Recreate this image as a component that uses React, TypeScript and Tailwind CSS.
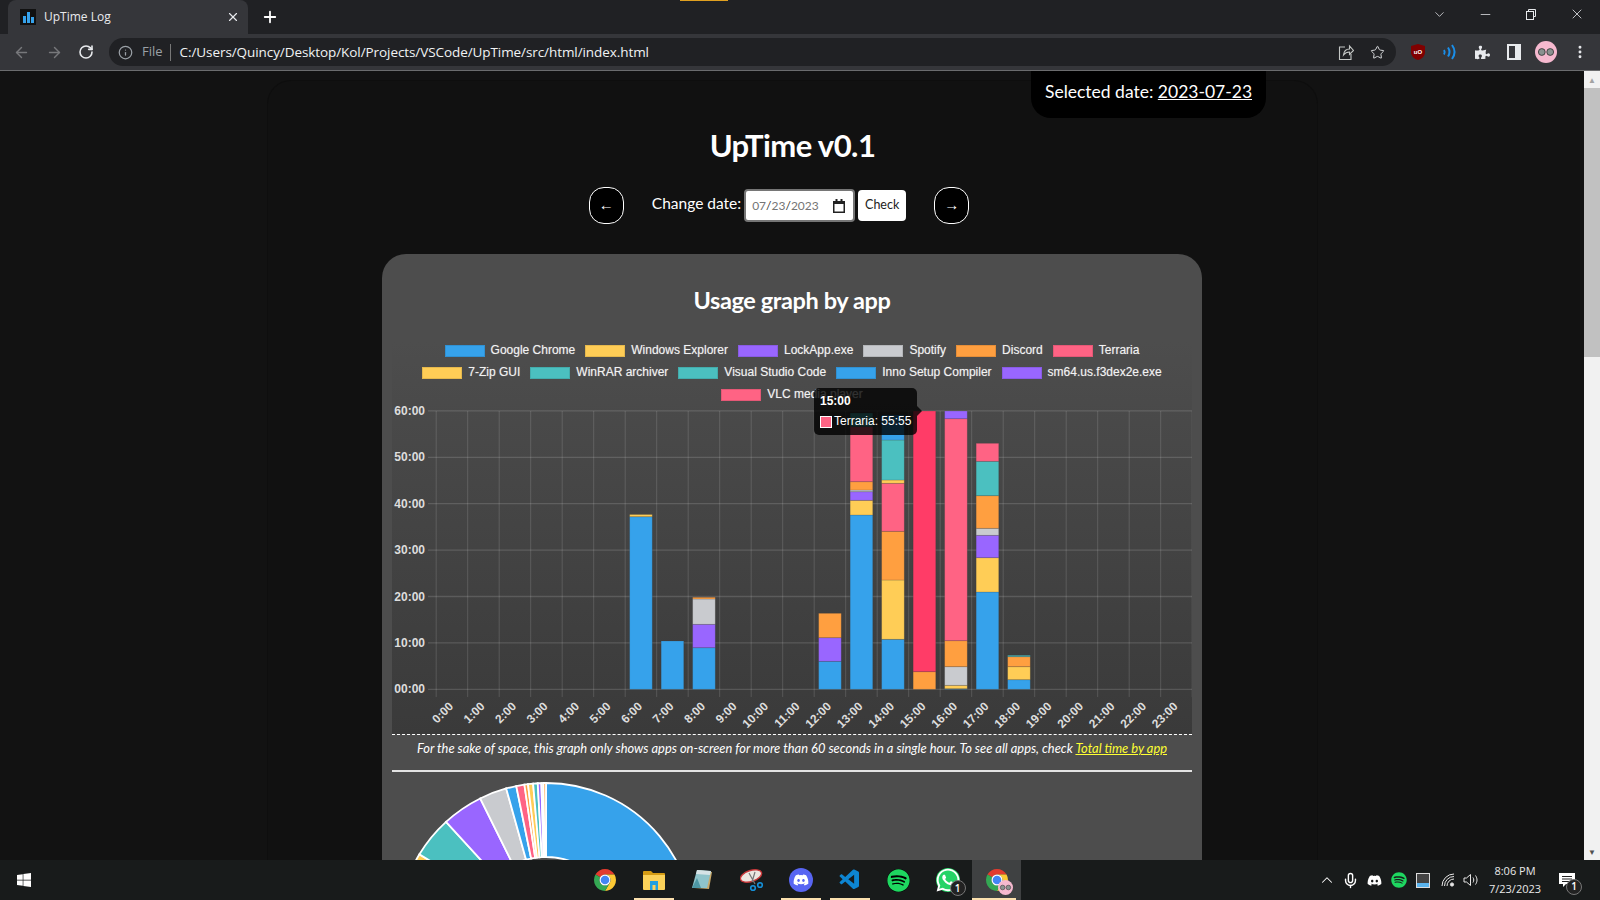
import React from "react";
import { ArrowLeft, ArrowRight, RotateCw, Info, Star, MoreVertical, X, Plus, ChevronDown, Minus, Mic, ChevronUp } from "lucide-react";
import { FaDiscord, FaSpotify, FaWhatsapp, FaWindows, FaPuzzlePiece } from "react-icons/fa";
import { VscVscode } from "react-icons/vsc";

const C = { blue: "#36a2eb", yellow: "#ffcd56", purple: "#9966ff", grey: "#c9cbcf", orange: "#ff9f40", pink: "#ff6384", teal: "#4bc0c0", red: "#ff3c67" };

const legend = [
  [["Google Chrome", C.blue], ["Windows Explorer", C.yellow], ["LockApp.exe", C.purple], ["Spotify", C.grey], ["Discord", C.orange], ["Terraria", C.pink]],
  [["7-Zip GUI", C.yellow], ["WinRAR archiver", C.teal], ["Visual Studio Code", C.teal], ["Inno Setup Compiler", C.blue], ["sm64.us.f3dex2e.exe", C.purple]],
  [["VLC media player", C.pink]],
];

const bars: [number, [string, number][]][] = [
  [6, [[C.blue, 516.7], [C.yellow, 514.5]]],
  [7, [[C.blue, 641]]],
  [8, [[C.blue, 647.7], [C.purple, 624.3], [C.grey, 599], [C.orange, 597.3]]],
  [12, [[C.blue, 661.3], [C.purple, 637.7], [C.orange, 613.3]]],
  [13, [[C.blue, 515], [C.yellow, 500.3], [C.purple, 491.7], [C.grey, 490], [C.orange, 481.7], [C.pink, 426.7], [C.teal, 413]]],
  [14, [[C.blue, 639.3], [C.yellow, 580], [C.orange, 531.3], [C.pink, 483.3], [C.yellow, 480], [C.teal, 440], [C.blue, 415]]],
  [15, [[C.orange, 671.7], [C.red, 411]]],
  [16, [[C.blue, 688.7], [C.yellow, 685.3], [C.grey, 666.7], [C.orange, 640.7], [C.pink, 418.7], [C.purple, 411]]],
  [17, [[C.blue, 592], [C.yellow, 557.7], [C.purple, 535.3], [C.grey, 528.3], [C.orange, 495.7], [C.teal, 461.3], [C.pink, 443.3]]],
  [18, [[C.blue, 679.7], [C.yellow, 666.7], [C.orange, 656.7], [C.teal, 655.3]]],
];

const X0 = 392, Y0 = 406, BASE = 689.3;

function Plot() {
  const gx = Array.from({ length: 25 }, (_, i) => 436.2 + i * 31.5 - X0);
  const gy = [0, 1, 2, 3, 4, 5].map((i) => BASE - i * 46.4 - Y0);
  const labels = ["00:00", "10:00", "20:00", "30:00", "40:00", "50:00", "60:00"];
  const grid = "rgba(255,255,255,0.14)";
  return (
    <svg width="800" height="328" viewBox="0 0 800 328" className="block">
      {gx.map((x, i) => <line key={i} x1={x} x2={x} y1={5} y2={291} stroke={grid} />)}
      {[...gy, BASE - 6 * 46.4 - Y0].map((y, i) => <line key={i} x1={36} x2={800} y1={y} y2={y} stroke={grid} strokeWidth={1.3} />)}
      {labels.map((l, i) => (
        <text key={l} x={33} y={BASE - i * 46.4 - Y0 + 4} textAnchor="end" fontFamily="Liberation Sans" fontWeight="700" fontSize="12" fill="#dddddd">{l}</text>
      ))}
      {Array.from({ length: 24 }, (_, i) => {
        const cx = 436.2 + (i + 0.5) * 31.5 - X0;
        return (
          <text key={i} transform={`translate(${cx + 2} ${301}) rotate(-45)`} textAnchor="end" fontFamily="Liberation Sans" fontWeight="700" fontSize="12" fill="#dddddd">{i}:00</text>
        );
      })}
      {bars.map(([h, segs]) => {
        const cx = 436.2 + (h + 0.5) * 31.5 - X0;
        let prev = BASE;
        return segs.map(([col, top], j) => {
          const el = <rect key={`${h}-${j}`} x={cx - 11.3} width={22.6} y={top - Y0} height={prev - top} fill={col} stroke="rgba(60,60,60,0.25)" strokeWidth={0.8} />;
          prev = top;
          return el;
        });
      })}
    </svg>
  );
}

function Pie() {
  const cx = 150, cy = 150, R = 148, r = 74;
  const pt = (a: number, rad: number) => {
    const t = ((a - 90) * Math.PI) / 180;
    return `${cx + rad * Math.cos(t)} ${cy + rad * Math.sin(t)}`;
  };
  const slices: [number, number, string][] = [
    [0, 200, C.blue], [200, 301.2, C.yellow], [301.2, 317.5, C.teal], [317.5, 333.6, C.purple], [333.6, 344.4, C.grey],
    [344.4, 348.4, C.blue], [348.4, 351.6, C.pink], [351.6, 353, C.orange], [353, 355, C.yellow], [355, 356.8, C.teal], [356.8, 358.2, C.purple], [358.2, 359, C.grey], [359, 360, C.orange],
  ];
  return (
    <svg width="300" height="300" viewBox="0 0 300 300" className="block">
      {slices.map(([a, b, c], i) => (
        <path key={i} d={`M${pt(a, R)} A${R} ${R} 0 ${b - a > 180 ? 1 : 0} 1 ${pt(b, R)} L${pt(b, r)} A${r} ${r} 0 ${b - a > 180 ? 1 : 0} 0 ${pt(a, r)} Z`} fill={c} stroke="#ffffff" strokeWidth={1.8} />
      ))}
    </svg>
  );
}

function Chrome({ s = 24 }: { s?: number }) {
  return (
    <svg width={s} height={s} viewBox="0 0 48 48">
      <path d="M4.95 13 A22 22 0 0 1 43.05 13 L24 13 A11 11 0 0 0 14.47 18.5 Z" fill="#e33b2e" />
      <path d="M43.05 13 A22 22 0 0 1 24 46 L33.53 29.5 A11 11 0 0 0 24 13 Z" fill="#fcc934" />
      <path d="M24 46 A22 22 0 0 1 4.95 13 L14.47 18.5 A11 11 0 0 0 33.53 29.5 Z" fill="#34a853" />
      <circle cx="24" cy="24" r="11" fill="#fff" />
      <circle cx="24" cy="24" r="8.6" fill="#4285f4" />
    </svg>
  );
}

function Avatar({ s = 22 }: { s?: number }) {
  return (
    <svg width={s} height={s} viewBox="0 0 22 22">
      <circle cx="11" cy="11" r="11" fill="#f6b9cf" />
      <circle cx="6.800" cy="11" r="3.400" fill="#8a9290" stroke="#2f2f2f" strokeWidth=".8" />
      <circle cx="15.200" cy="11" r="3.400" fill="#8a9290" stroke="#2f2f2f" strokeWidth=".8" />
    </svg>
  );
}

function Slot({ on, bg, children }: { on?: boolean; bg?: boolean; children: React.ReactNode }) {
  return (
    <div className={`relative flex h-10 w-[49px] items-center justify-center ${bg ? "bg-[#3f4142]" : ""}`}>
      {children}
      {on && <div className={`absolute bottom-0 h-[2px] bg-[#fbe0ae] ${bg ? "left-0 w-[44px]" : "left-1/2 w-10 -translate-x-1/2"}`} />}
    </div>
  );
}

function Badge({ className }: { className: string }) {
  return <div className={`absolute flex h-[16px] w-[16px] items-center justify-center rounded-full border border-[#777] bg-[#222] font-['Open_Sans',sans-serif] text-[10px] font-semibold text-white ${className}`}>1</div>;
}

export default function App() {
  return (
    <div className="flex h-[900px] w-[1600px] flex-col overflow-hidden bg-[#121212] font-['Open_Sans',sans-serif]">
      {/* tab strip */}
      <div className="relative flex h-[34px] items-end bg-[#202124] pl-2">
        <div className="absolute left-[680px] top-0 h-px w-12 bg-[#e0a020]" />
        <div className="flex h-[34px] w-[240px] items-center rounded-t-lg bg-[#35363a] pl-3 pr-2">
          <div className="flex h-4 w-4 items-end justify-center gap-px bg-[#111] pb-[2px]">
            <div className="h-[7px] w-[3px] bg-[#36a2eb]" />
            <div className="h-[11px] w-[3px] bg-[#36a2eb]" />
            <div className="h-[6px] w-[3px] bg-[#36a2eb]" />
          </div>
          <span className="ml-2 text-[12px] text-[#e8eaed]">UpTime Log</span>
          <X size={14} strokeWidth={2} className="ml-auto text-[#e8eaed]" />
        </div>
        <Plus size={18} strokeWidth={2.4} className="mb-[8px] ml-[13px] text-white" />
        <div className="ml-auto mb-[12px] flex items-center text-[#e8eaed]">
          <div className="flex w-[46px] justify-center"><ChevronDown size={15} strokeWidth={1.2} /></div>
          <div className="flex w-[46px] justify-center"><Minus size={15} strokeWidth={1.2} /></div>
          <div className="flex w-[46px] justify-center"><svg width="12" height="12" viewBox="0 0 12 12" fill="none" stroke="#e8eaed"><rect x="1.5" y="3.5" width="7" height="8" /><path d="M3.5 3.5V1.5H10.5V8.5H8.5" /></svg></div>
          <div className="flex w-[46px] justify-center"><X size={16} strokeWidth={1.2} /></div>
        </div>
      </div>
      {/* toolbar */}
      <div className="flex h-[37px] items-center border-b border-[#6b6c6e] bg-[#35363a] pl-[13px]">
        <ArrowLeft size={17} className="text-[#77787b]" />
        <ArrowRight size={17} className="ml-[16px] text-[#77787b]" />
        <RotateCw size={16} strokeWidth={2.4} className="ml-[15px] text-[#e8eaed]" />
        <div className="ml-[15px] flex h-[28px] w-[1287px] items-center rounded-full bg-[#202124] pl-[9px] pr-[11px]">
          <Info size={15} className="text-[#9aa0a6]" />
          <span className="ml-[9px] text-[13px] text-[#9aa0a6]">File</span>
          <div className="ml-[7px] h-[17px] w-px bg-[#777]" />
          <span className="ml-[9px] text-[13.5px] tracking-[-0.08px] text-[#f1f3f4]">C:/Users/Quincy/Desktop/Kol/Projects/VSCode/UpTime/src/html/index.html</span>
          <svg width="16" height="18" viewBox="0 0 16 18" fill="none" stroke="#c4c7c5" strokeWidth="1.1" className="ml-auto">
            <path d="M7 4H1.5V16.5H13V11" /><path d="M5.5 12c.5-4 3-6 6-6V3l4 4.5-4 4V9c-3 0-4.500 1-6 3z" />
          </svg>
          <Star size={15} strokeWidth={1.6} className="ml-[16px] text-[#d5d7d9]" />
        </div>
        <svg width="16" height="18" viewBox="0 0 16 18" className="ml-[14px]"><path d="M8 1 15 3v6c0 4-3 7-7 8-4-1-7-4-7-8V3z" fill="#800000" /><text x="8" y="11" textAnchor="middle" fontSize="6" fontWeight="700" fill="#fff" fontFamily="Liberation Sans">uO</text></svg>
        <svg width="16" height="18" viewBox="0 0 16 18" fill="none" stroke="#1a8ee8" strokeWidth="2" className="ml-[16px]"><path d="M2 7c1 1.500 1 3 0 4.500" /><path d="M6 4.500c2 3 2 6 0 9" /><path d="M10 2c3.300 4.500 3.300 9.500 0 14" /></svg>
        <FaPuzzlePiece size={15} className="ml-[17px] text-[#e8eaed]" />
        <div className="ml-[17px] h-[16px] w-[14px] border-2 border-[#e8eaed] border-r-[6px]" />
        <div className="ml-[14px]"><Avatar /></div>
        <MoreVertical size={16} strokeWidth={2.4} className="ml-[15px] text-[#e8eaed]" />
      </div>
      {/* middle */}
      <div className="flex min-h-0 flex-1">
        <div className="relative min-w-0 flex-1 overflow-hidden bg-[#121212]">
          <div className="relative ml-[267px] mt-[9px] h-[1200px] w-[1051px] rounded-t-3xl border-x border-t border-[#0e0e0e] bg-[#111111]">
            <div className="absolute right-[51px] top-[-10px] flex h-[47px] w-[235px] items-center justify-center whitespace-nowrap rounded-b-[20px] bg-black pb-[5px] font-['Lato',sans-serif] text-[17.5px] text-white">
              <span>Selected date:&nbsp;<span className="underline">2023-07-23</span></span>
            </div>
            <h1 className="pt-[42px] text-center font-['Lato',sans-serif] text-[31px] font-bold leading-[44px] tracking-[-0.55px] text-white">UpTime v0.1</h1>
            <div className="mt-[20px] flex items-center justify-center pr-[27px] font-['Lato',sans-serif]">
              <div className="flex h-[37px] w-[35px] items-center justify-center rounded-[15px] border border-white bg-black font-['Liberation_Sans',sans-serif] text-[15px] text-white">←</div>
              <span className="ml-[28px] pb-[3px] text-[15.5px] text-white">Change date:</span>
              <div className="ml-[3px] flex h-[33px] w-[111px] items-center rounded-[4px] border-2 border-[#767676] bg-white pl-[6px] pr-[6px] text-[12px] text-[#757575]">
                <span>07<span className="text-[#333]">/</span>23<span className="text-[#333]">/</span>2023</span>
                <svg width="12" height="14" viewBox="0 0 12 14" className="ml-auto mr-[2px]"><path d="M0 2h12v12H0z" fill="#222" /><path d="M1.500 5h9v7.500h-9z" fill="#fff" /><path d="M2.500 0h2v2h-2zM7.500 0h2v2h-2z" fill="#222" /></svg>
              </div>
              <div className="ml-[3px] flex h-[31px] w-[48px] items-center justify-center rounded-[4px] bg-white text-[12.5px] text-[#222]">Check</div>
              <div className="ml-[28px] flex h-[37px] w-[35px] items-center justify-center rounded-[15px] border border-white bg-black font-['Liberation_Sans',sans-serif] text-[15px] text-white">→</div>
            </div>
            <div className="ml-[114px] mt-[30px] w-[820px] rounded-t-3xl bg-[#4d4d4d] px-[10px] pb-10">
              <h2 className="pt-[29px] text-center font-['Lato',sans-serif] text-[23.5px] font-bold leading-[34px] tracking-[-0.4px] text-white">Usage graph by app</h2>
              <div className="mt-[23px] border-b border-dashed border-white bg-gradient-to-b from-[#4d4d4d] to-[#3a3a3a]">
                <div className="flex flex-col items-center font-['Liberation_Sans',sans-serif] text-[12px] text-[#f2f2f2] [text-shadow:0_0_1px_rgba(255,255,255,0.45)]">
                  {legend.map((row, i) => (
                    <div key={i} className="flex h-[22px] items-center gap-x-[10px]">
                      {row.map(([n, c]) => (
                        <div key={n} className="flex items-center gap-[6px]">
                          <div className="h-[12px] w-[40px] border border-black/10" style={{ backgroundColor: c }} />
                          <span className="pb-[2px]">{n}</span>
                        </div>
                      ))}
                    </div>
                  ))}
                </div>
                <Plot />
              </div>
              <p className="h-[35px] pt-[4px] text-center font-['Lato',sans-serif] text-[12.9px] italic leading-[18px] text-white">
                For the sake of space, this graph only shows apps on-screen for more than 60 seconds in a single hour. To see all apps, check <span className="text-[#ffff33] underline">Total time by app</span>
              </p>
              <div className="h-[2px] bg-[#e3e3e3]" />
              <div className="ml-[4px] mt-[9px]"><Pie /></div>
            </div>
            {/* tooltip */}
            <div className="absolute left-[546px] top-[307px] h-[47px] w-[103px] rounded-[5px] bg-black/80 font-['Liberation_Sans',sans-serif] text-[12px] text-white">
              <div className="absolute left-[6px] top-[4px] font-bold">15:00</div>
              <div className="absolute left-[6px] top-[28px] h-[12px] w-[12px] border border-white bg-[#ff6384]" />
              <div className="absolute left-[20px] top-[24px] whitespace-nowrap">Terraria: 55:55</div>
              <div className="absolute left-full top-[18px] h-0 w-0 border-y-[5px] border-l-[5px] border-y-transparent border-l-black/80" />
            </div>
          </div>
        </div>
        {/* scrollbar */}
        <div className="flex w-4 flex-col items-center bg-[#f1f1f1]">
          <div className="flex h-[17px] items-center justify-center text-[8px] leading-none text-[#a3a3a3]">▲</div>
          <div className="h-[269px] w-full bg-[#c1c1c1]" />
          <div className="flex-1" />
          <div className="flex h-[17px] items-center justify-center text-[8px] leading-none text-[#505050]">▼</div>
        </div>
      </div>
      {/* taskbar */}
      <div className="flex h-10 items-center bg-[#181b1b] text-[#e8e8e8]">
        <div className="flex w-12 justify-center"><FaWindows size={16} className="text-white" /></div>
        <div className="ml-[532px] flex">
          <Slot><Chrome /></Slot>
          <Slot on>
            <svg width="22" height="20" viewBox="0 0 22 20"><path d="M0 2a1 1 0 0 1 1-1h7l2 2h11a1 1 0 0 1 1 1v4H0z" fill="#d59c14" /><path d="M0 5h22v14a1 1 0 0 1-1 1H1a1 1 0 0 1-1-1z" fill="#fbd25a" /><rect x="7" y="11" width="8" height="9" fill="#1f9fe0" /><rect x="9.500" y="15" width="3" height="5" fill="#fbd25a" /></svg>
          </Slot>
          <Slot>
            <svg width="24" height="24" viewBox="0 0 24 24"><path d="M7 2 21 4 18 21 3 20z" fill="#c9a96a" /><path d="M6 2 20 3 16 20 1 20z" fill="#8fc4cb" /><path d="M6 2 20 3 19 7 5 6z" fill="#d6e3e6" /><path d="M1 20 6 10 10 20z" fill="#4d97a4" /></svg>
          </Slot>
          <Slot>
            <svg width="24" height="24" viewBox="0 0 24 24" fill="none"><ellipse cx="11" cy="8" rx="11" ry="5.500" transform="rotate(-18 11 8)" fill="#ece6e0" stroke="#c8383a" strokeWidth="1.400" /><path d="M9 5l6 11M15 4 12 14" stroke="#777" strokeWidth="1.200" /><circle cx="13" cy="20" r="2.300" stroke="#1590d8" strokeWidth="1.600" /><circle cx="20" cy="17" r="2.300" stroke="#1590d8" strokeWidth="1.600" /></svg>
          </Slot>
          <Slot on>
            <div className="flex h-6 w-6 items-center justify-center rounded-full bg-[#5865f2]"><FaDiscord size={16} className="text-white" /></div>
          </Slot>
          <Slot on><VscVscode size={24} className="text-[#0d85d1]" /></Slot>
          <Slot>
            <div className="flex h-[23px] w-[23px] items-center justify-center rounded-full bg-black"><FaSpotify size={23} className="text-[#1ed760]" /></div>
          </Slot>
          <Slot>
            <div className="relative flex h-6 w-6 items-center justify-center rounded-full bg-[#25d366]">
              <FaWhatsapp size={26} className="text-white" />
              <Badge className="-bottom-[4px] -right-[6px]" />
            </div>
          </Slot>
          <Slot on bg>
            <div className="relative"><Chrome /><div className="absolute -bottom-[3px] -right-[4px]"><Avatar s={15} /></div></div>
          </Slot>
        </div>
        <div className="-ml-[5px] h-10 w-[3px] bg-[#3f4142]" />
        <div className="ml-auto flex items-center">
          <ChevronUp size={18} strokeWidth={1.400} className="text-white" />
          <Mic size={17} className="ml-[6px] text-white" />
          <FaDiscord size={15} className="ml-[8px] text-white" />
          <FaSpotify size={16} className="ml-[9px] text-[#1ed760]" />
          <div className="ml-[10px] flex h-[13px] w-[12px] flex-col justify-end bg-[#444] outline outline-1 outline-[#ddd]"><div className="h-[4px] bg-[#5ab4ee]" /></div>
          <svg width="14" height="14" viewBox="0 0 14 14" fill="none" stroke="#e8e8e8" strokeWidth="1" className="ml-[12px]"><path d="M1 13A12 12 0 0 1 13 1" /><path d="M3.500 13A9.500 9.500 0 0 1 13 3.500" /><path d="M6 13A7 7 0 0 1 13 6" /><circle cx="11" cy="11.500" r="1.600" fill="#e8e8e8" /></svg>
          <svg width="16" height="14" viewBox="0 0 16 14" fill="none" stroke="#e8e8e8" className="ml-[8px]"><path d="M1 5h2.500L7.500 1.500v11L3.500 9H1z" /><path d="M10 4.500c1 1.500 1 3.500 0 5M12.500 2.500c2 3 2 6 0 9" /></svg>
          <div className="ml-[10px] flex w-[52px] flex-col items-center text-[11px] leading-[18px] text-[#e8e8e8]"><span>8:06 PM</span><span>7/23/2023</span></div>
          <div className="relative ml-[18px] mr-[25px]">
            <svg width="16" height="15" viewBox="0 0 16 15"><path d="M0 0h16v11H7l-3 3v-3H0z" fill="#fff" /><path d="M3 3.500h10M3 6h10M3 8.500h7" stroke="#222" /></svg>
            <Badge className="-bottom-[7px] -right-[7px]" />
          </div>
        </div>
      </div>
    </div>
  );
}
